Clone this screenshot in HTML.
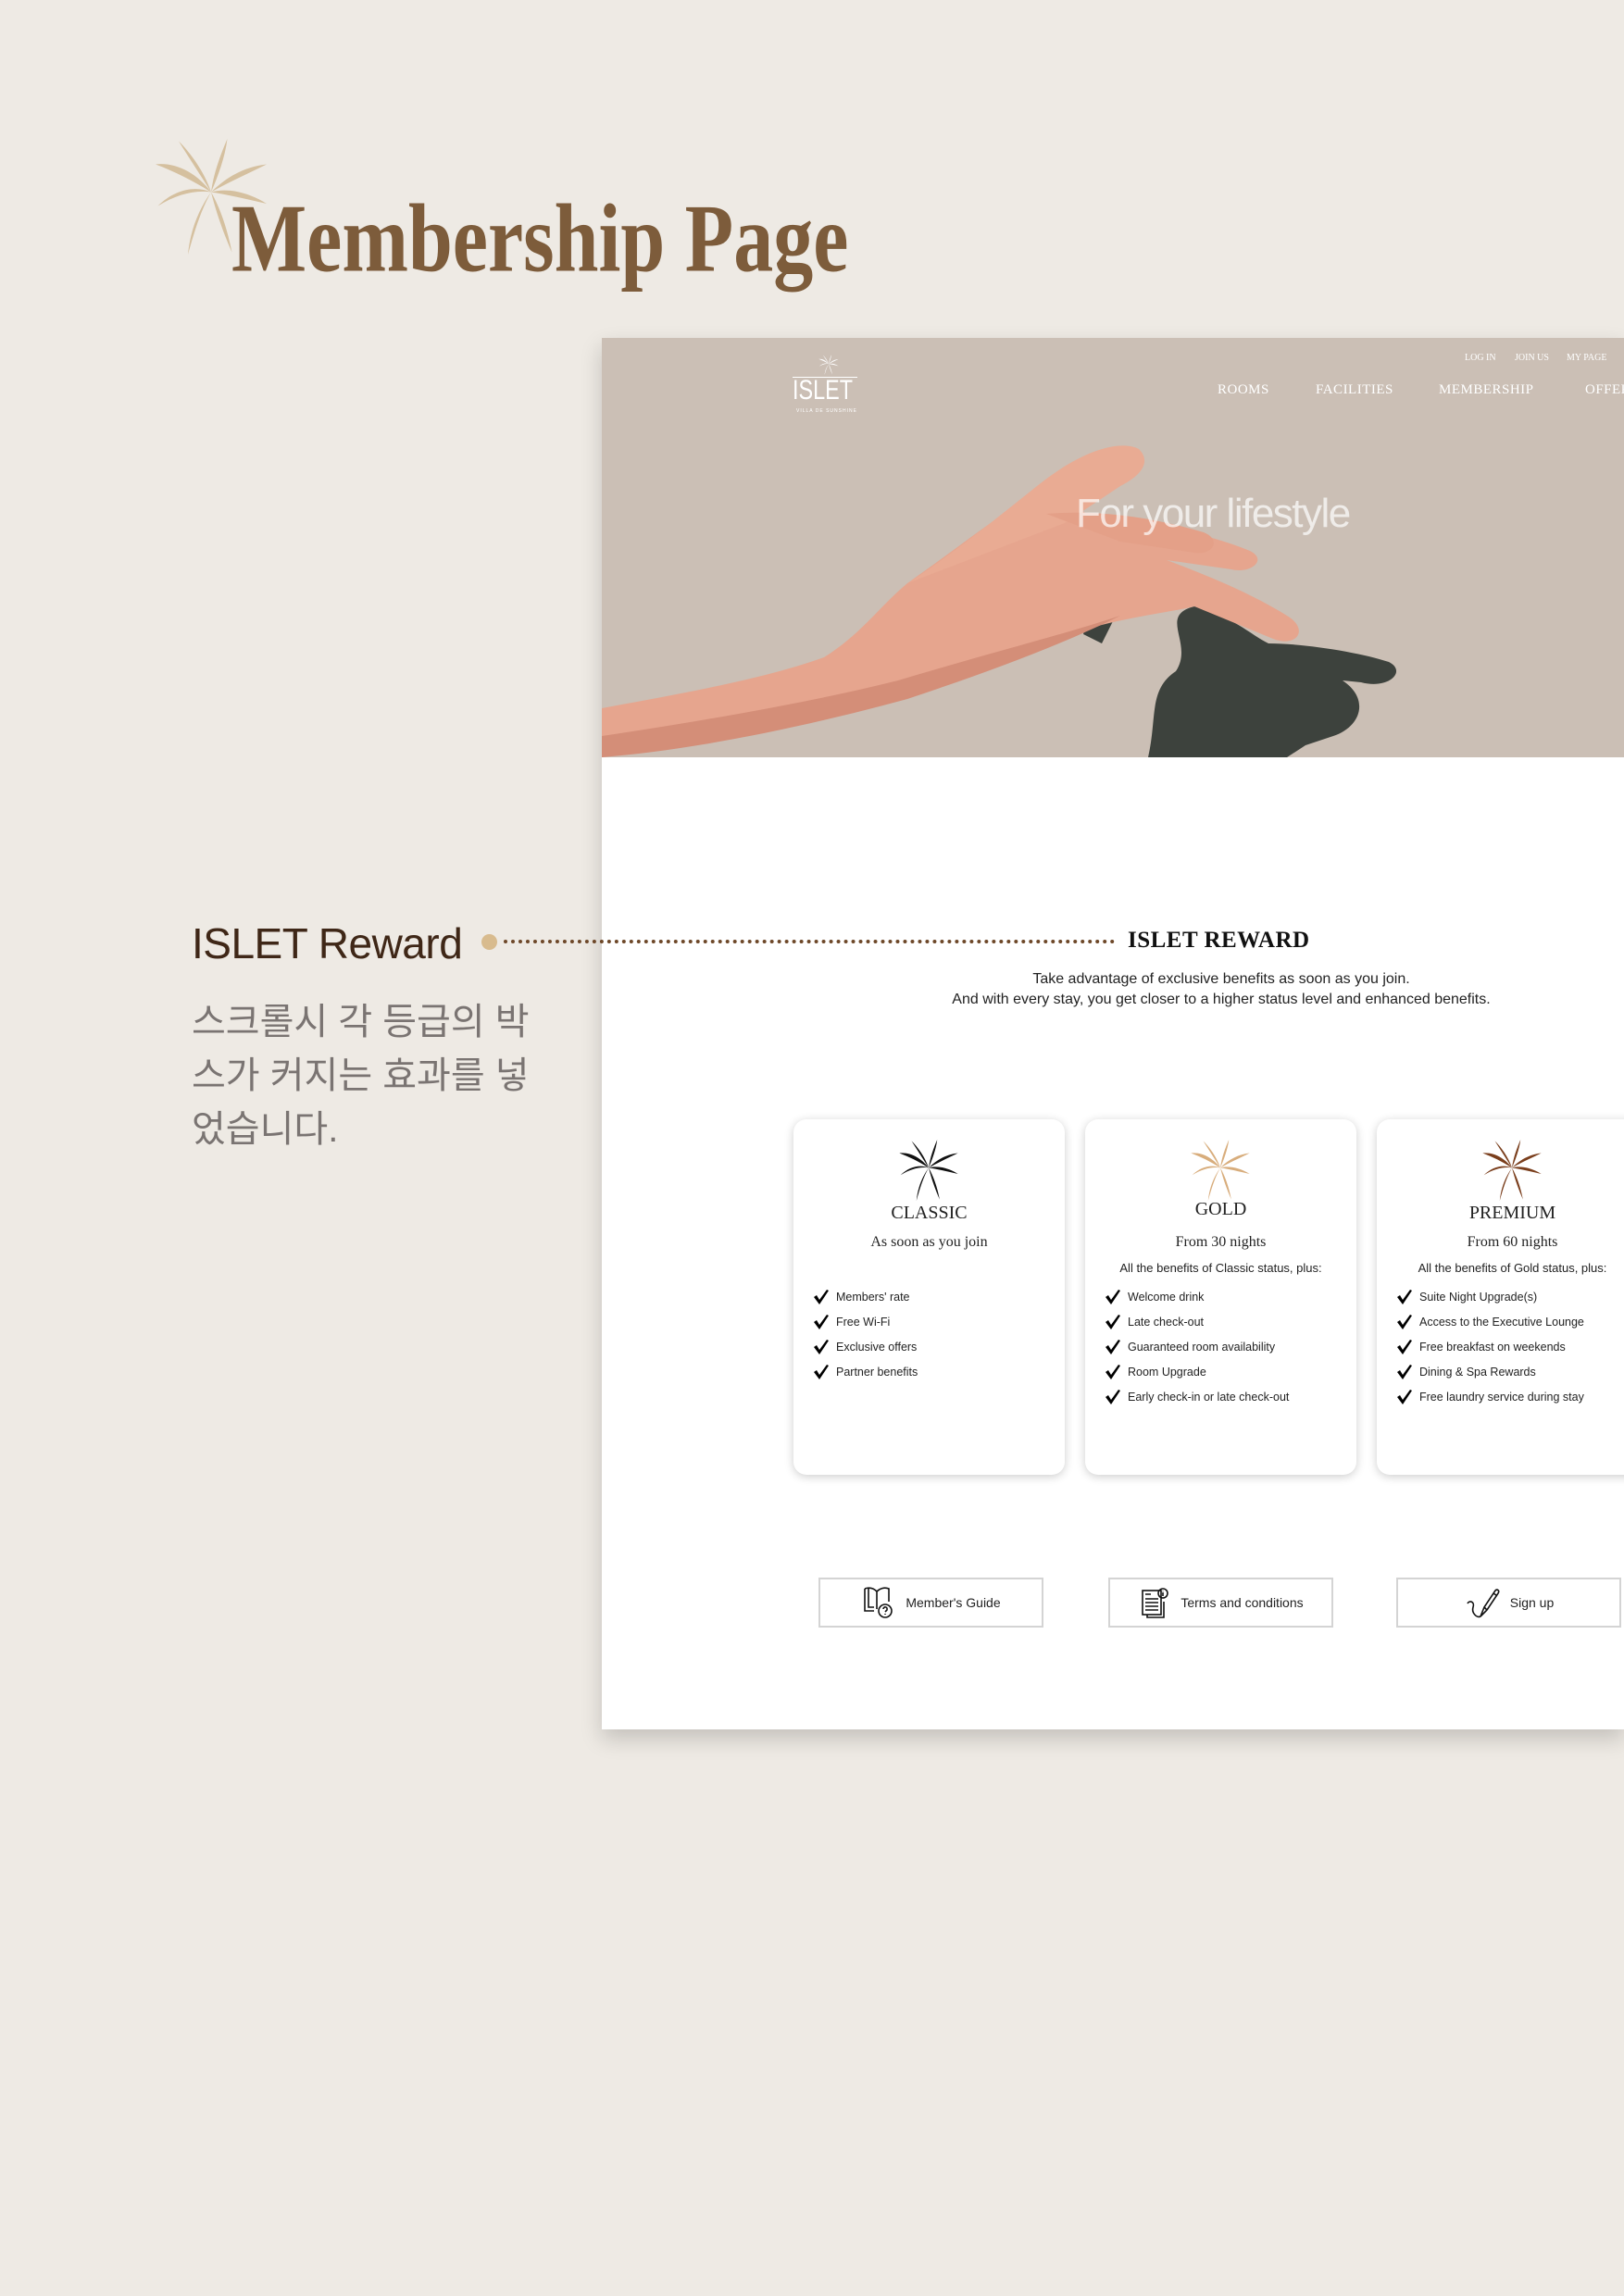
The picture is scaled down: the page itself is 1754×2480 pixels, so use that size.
<!DOCTYPE html>
<html><head><meta charset="utf-8">
<style>
*{margin:0;padding:0;box-sizing:border-box}
html,body{width:1754px;height:2480px;overflow:hidden}
body{background:#eeeae4;font-family:"Liberation Sans","Noto Sans CJK KR",sans-serif;position:relative}
.abs{position:absolute}
.title{left:250px;top:196px;font-family:"Liberation Serif",serif;font-weight:bold;font-size:86px;color:#7d5c3b;letter-spacing:0px;transform:scaleY(1.22);transform-origin:left top;white-space:nowrap}
.mock{left:650px;top:365px;width:1104px;height:1503px;background:#fff;box-shadow:0 10px 22px rgba(0,0,0,.18);overflow:hidden}
.hero{left:0;top:0;width:1104px;height:453px;background:#cbbfb5}
.top{color:#fff;font-family:"Liberation Serif",serif;font-size:10px;top:16px}
.nav{color:#fff;font-family:"Liberation Serif",serif;font-size:15px;top:48px;letter-spacing:.5px}
.life{left:512px;top:165px;color:#fff;font-size:44px;opacity:.7;letter-spacing:-1.5px}
.card{top:844px;width:293px;height:384px;background:#fff;border-radius:14px;box-shadow:0 2px 10px rgba(0,0,0,.2);text-align:center;font-family:"Liberation Serif",serif;color:#222}
.card .nm{position:absolute;left:0;right:0;top:90px;font-size:20px}
.card .sub{position:absolute;left:0;right:0;top:124px;font-size:16px}
.card .all{position:absolute;left:0;right:0;top:153px;font-size:13px;font-family:"Liberation Sans",sans-serif}
.card ul{position:absolute;left:22px;top:180px;list-style:none;text-align:left;font-family:"Liberation Sans",sans-serif;font-size:12.5px}
.card li{height:27px;line-height:22px;display:flex;align-items:center}
.card li svg{margin-right:8px}
.btn{top:1339px;width:243px;height:54px;border:2px solid #d4d4d4;display:flex;align-items:center;justify-content:center;font-size:14px;color:#222;gap:10px}
</style></head><body>
<svg width="0" height="0" style="position:absolute">
<defs>
<g id="palm">
<path d="M50 46 C40 30 30 15 22 2 C32 12 44 28 50 46Z"/>
<path d="M50 46 C52 30 58 14 64 0 C62 16 56 32 50 46Z"/>
<path d="M50 46 C34 36 18 28 2 22 C20 20 38 30 50 46Z"/>
<path d="M50 46 C64 32 80 24 98 22 C82 30 64 38 50 46Z"/>
<path d="M50 46 C36 44 20 48 4 58 C18 44 36 40 50 46Z"/>
<path d="M50 46 C64 42 82 46 98 56 C80 52 64 48 50 46Z"/>
<path d="M50 46 C42 60 36 78 30 100 C32 78 40 60 50 46Z"/>
<path d="M50 46 C58 60 64 78 68 98 C60 80 54 62 50 46Z"/>
</g>
<path id="chk" d="M0 8 L3 6 L6 11 L14 0 L16 1 L6 16 Z"/>
</defs></svg>

<svg class="abs" style="left:158px;top:150px" width="140" height="125" viewBox="0 0 100 100" fill="#d5c09f"><use href="#palm"/></svg>
<div class="abs title">Membership Page</div>

<div class="abs" style="left:207px;top:992px;font-size:46px;color:#3f2717;letter-spacing:-0.5px">ISLET Reward</div>
<div class="abs" style="left:520px;top:1009px;width:17px;height:17px;border-radius:50%;background:#d8bb8e;z-index:5"></div>
<div class="abs" style="left:544px;top:1015px;width:660px;border-top:4px dotted #6e4829;z-index:5"></div>
<div class="abs" style="left:207px;top:1075px;font-size:40px;line-height:58px;color:#7a7472">스크롤시 각 등급의 박<br>스가 커지는 효과를 넣<br>었습니다.</div>

<div class="abs mock">
 <div class="abs hero">
  <svg class="abs" style="left:0;top:0" width="1104" height="453" viewBox="0 0 1104 453">
   <path d="M590 453 C600 410 590 380 620 360 C640 330 600 300 640 290 C680 300 700 320 720 330 C760 330 820 340 850 350 C870 360 850 380 820 372 L800 370 C830 390 820 420 790 430 L760 440 L740 453Z" fill="#3d423d"/>
   <path d="M540 250 C560 250 570 270 560 290 L540 330 L520 320Z" fill="#3d423d"/>
   <path d="M0 400 C80 385 170 370 240 345 C280 320 300 290 330 265 C380 230 430 190 480 160 L560 215 C600 200 650 210 700 230 C720 240 700 255 680 250 L610 240 C650 255 700 275 740 300 C765 315 750 335 725 325 L640 290 C620 295 580 300 540 310 C470 330 400 360 320 390 C220 420 100 440 0 453Z" fill="#e6a58e"/>
   <path d="M330 265 C370 240 420 200 470 160 C520 120 560 110 580 120 C595 135 580 150 560 160 L500 200 Z" fill="#e9ab93"/>
   <path d="M480 190 C540 185 600 195 650 210 C670 218 660 235 640 232 L560 220Z" fill="#e4a088"/>
   <path d="M0 430 C100 415 220 395 320 370 C420 340 500 320 560 300 C500 330 420 360 330 390 C220 420 100 445 0 453Z" fill="#d48e78"/>
  </svg>
  <svg class="abs" style="left:233px;top:18px" width="24" height="22" viewBox="0 0 100 100" fill="#fff"><use href="#palm"/></svg>
  <div class="abs" style="left:206px;top:42px;width:70px;border-top:1px solid #fff"></div>
  <div class="abs" style="left:206px;top:40px;color:#fff;font-family:'Liberation Sans',sans-serif;font-size:30px;transform:scaleX(.78);transform-origin:left">ISLET</div>
  <div class="abs" style="left:210px;top:76px;color:#fff;font-size:5px;letter-spacing:1px">VILLA DE SUNSHINE</div>
  <div class="abs top" style="left:932px">LOG IN</div>
  <div class="abs top" style="left:986px">JOIN US</div>
  <div class="abs top" style="left:1042px">MY PAGE</div>
  <div class="abs nav" style="left:665px">ROOMS</div>
  <div class="abs nav" style="left:771px">FACILITIES</div>
  <div class="abs nav" style="left:904px">MEMBERSHIP</div>
  <div class="abs nav" style="left:1062px">OFFERS</div>
  <div class="abs life">For your lifestyle</div>
 </div>

 <div class="abs" style="left:568px;top:637px;font-family:'Liberation Serif',serif;font-weight:bold;font-size:25px;color:#111;letter-spacing:.5px">ISLET REWARD</div>
 <div class="abs" style="left:0;width:1338px;top:682px;text-align:center;font-size:16px;line-height:22px;color:#222">Take advantage of exclusive benefits as soon as you join.<br>And with every stay, you get closer to a higher status level and enhanced benefits.</div>

 <div class="abs card" style="left:207px">
  <svg style="position:absolute;left:113px;top:22px" width="66" height="66" viewBox="0 0 100 100" fill="#111"><use href="#palm"/></svg>
  <div class="nm">CLASSIC</div>
  <div class="sub">As soon as you join</div>
  <ul style="top:178px">
   <li><svg width="16" height="16" viewBox="0 0 16 16"><use href="#chk"/></svg>Members' rate</li>
   <li><svg width="16" height="16" viewBox="0 0 16 16"><use href="#chk"/></svg>Free Wi-Fi</li>
   <li><svg width="16" height="16" viewBox="0 0 16 16"><use href="#chk"/></svg>Exclusive offers</li>
   <li><svg width="16" height="16" viewBox="0 0 16 16"><use href="#chk"/></svg>Partner benefits</li>
  </ul>
 </div>
 <div class="abs card" style="left:522px">
  <svg style="position:absolute;left:113px;top:22px" width="66" height="66" viewBox="0 0 100 100" fill="#d8ad7c"><use href="#palm"/></svg>
  <div class="nm" style="top:86px">GOLD</div>
  <div class="sub">From 30 nights</div>
  <div class="all">All the benefits of Classic status, plus:</div>
  <ul style="top:178px">
   <li><svg width="16" height="16" viewBox="0 0 16 16"><use href="#chk"/></svg>Welcome drink</li>
   <li><svg width="16" height="16" viewBox="0 0 16 16"><use href="#chk"/></svg>Late check-out</li>
   <li><svg width="16" height="16" viewBox="0 0 16 16"><use href="#chk"/></svg>Guaranteed room availability</li>
   <li><svg width="16" height="16" viewBox="0 0 16 16"><use href="#chk"/></svg>Room Upgrade</li>
   <li><svg width="16" height="16" viewBox="0 0 16 16"><use href="#chk"/></svg>Early check-in or late check-out</li>
  </ul>
 </div>
 <div class="abs card" style="left:837px">
  <svg style="position:absolute;left:113px;top:22px" width="66" height="66" viewBox="0 0 100 100" fill="#7a3e1c"><use href="#palm"/></svg>
  <div class="nm">PREMIUM</div>
  <div class="sub">From 60 nights</div>
  <div class="all">All the benefits of Gold status, plus:</div>
  <ul style="top:178px">
   <li><svg width="16" height="16" viewBox="0 0 16 16"><use href="#chk"/></svg>Suite Night Upgrade(s)</li>
   <li><svg width="16" height="16" viewBox="0 0 16 16"><use href="#chk"/></svg>Access to the Executive Lounge</li>
   <li><svg width="16" height="16" viewBox="0 0 16 16"><use href="#chk"/></svg>Free breakfast on weekends</li>
   <li><svg width="16" height="16" viewBox="0 0 16 16"><use href="#chk"/></svg>Dining &amp; Spa Rewards</li>
   <li><svg width="16" height="16" viewBox="0 0 16 16"><use href="#chk"/></svg>Free laundry service during stay</li>
  </ul>
 </div>

 <div class="abs btn" style="left:234px">
  <svg width="38" height="38" viewBox="0 0 38 38" fill="none" stroke="#111" stroke-width="1.6"><path d="M4 4 V28 H14 M4 4 C10 2 14 4 17 7 C20 4 25 2 30 4 V18 M17 7 V26 M8 4 V24 H14"/><circle cx="26" cy="28" r="7"/><path d="M24 26 C24 23 29 23 28 27 L26 29 M26 31 V32"/></svg>
  Member's Guide</div>
 <div class="abs btn" style="left:547px">
  <svg width="36" height="38" viewBox="0 0 36 38" fill="none" stroke="#111" stroke-width="1.6"><rect x="5" y="6" width="20" height="26"/><path d="M8 10 H14 M8 15 H22 M8 19 H22 M8 23 H22 M8 27 H22 M10 32 V35 H28 V18"/><circle cx="27" cy="9" r="5"/><path d="M27 8 V12 M27 6 V6.5"/></svg>
  Terms and conditions</div>
 <div class="abs btn" style="left:858px">
  <svg width="40" height="38" viewBox="0 0 40 38" fill="none" stroke="#111" stroke-width="1.6"><path d="M18 34 L22 24 L34 6 C36 4 39 6 37 9 L25 27 Z M22 24 L25 27 M32 9 L35 11"/><path d="M18 34 C14 36 8 30 10 24 C12 18 6 16 4 20"/></svg>
  Sign up</div>
</div>
</body></html>
